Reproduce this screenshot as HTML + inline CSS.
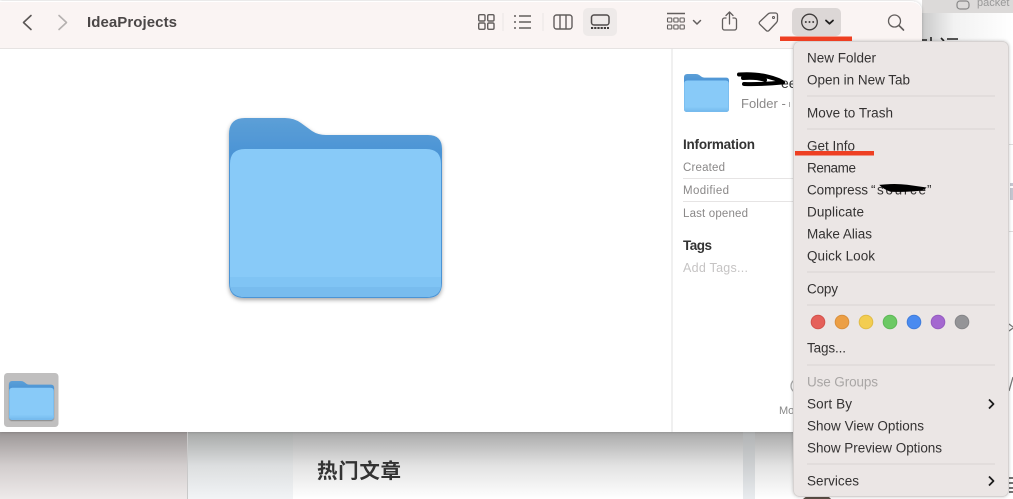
<!DOCTYPE html>
<html><head><meta charset="utf-8"><title>IdeaProjects</title>
<style>
html,body{margin:0;padding:0;background:#fff;width:1013px;height:499px;overflow:hidden}
svg{display:block}
text{font-family:"Liberation Sans","Noto Sans CJK SC",sans-serif}
.m{font-size:13.5px;fill:#343232}
.l{font-size:11.5px;fill:#8a8888}
.b{font-size:13.5px;font-weight:bold;fill:#333}
</style></head><body>
<svg width="1013" height="499" viewBox="0 0 1013 499" xmlns="http://www.w3.org/2000/svg">
<defs>
<linearGradient id="sh1" x1="0" y1="0" x2="0" y2="1"><stop offset="0" stop-color="#9b9696"/><stop offset=".5" stop-color="#d2cdcd"/><stop offset="1" stop-color="#eeeaea"/></linearGradient>
<linearGradient id="sh2" x1="0" y1="0" x2="0" y2="1"><stop offset="0" stop-color="#a6a8a7"/><stop offset=".5" stop-color="#dcdedf"/><stop offset="1" stop-color="#f2f4f6"/></linearGradient>
<linearGradient id="sh3" x1="0" y1="0" x2="0" y2="1"><stop offset="0" stop-color="#a9a9a9"/><stop offset=".5" stop-color="#e2e2e2"/><stop offset="1" stop-color="#fff"/></linearGradient>
<linearGradient id="sh4" x1="0" y1="0" x2="0" y2="1"><stop offset="0" stop-color="#b0b2b3"/><stop offset="1" stop-color="#e9ecef"/></linearGradient>
<linearGradient id="tr" x1="0" y1="0" x2="1" y2="0"><stop offset="0" stop-color="#c9c9c9"/><stop offset=".35" stop-color="#f2f2f2"/><stop offset="1" stop-color="#fff"/></linearGradient>
<linearGradient id="bk" x1="0" y1="0" x2="0" y2="1"><stop offset="0" stop-color="#5c9fd7"/><stop offset=".2" stop-color="#4b94d5"/><stop offset="1" stop-color="#4b94d5"/></linearGradient>
<filter id="fs" x="-10%" y="-10%" width="120%" height="125%"><feDropShadow dx="0" dy="2" stdDeviation="2" flood-color="#000" flood-opacity=".35"/></filter>
<filter id="fs2" x="-10%" y="-10%" width="120%" height="125%"><feDropShadow dx="0" dy="1" stdDeviation=".6" flood-color="#000" flood-opacity=".3"/></filter>
<filter id="ws" x="-5%" y="-5%" width="110%" height="110%"><feDropShadow dx="0" dy="0" stdDeviation="1.5" flood-color="#000" flood-opacity=".22"/></filter>
<symbol id="folder" viewBox="0 0 213 180" preserveAspectRatio="none">
<path d="M0 16Q0 0 16 0H56Q65 0 72 5L83 13Q89 17 97 17H199Q213 17 213 31V165Q213 180 198 180H15Q0 180 0 165Z" fill="url(#bk)"/>
<path d="M1 46Q1 31 16 31H197Q212 31 212 46V165Q212 179 197 179H16Q1 179 1 165Z" fill="#88caf8"/>
<path d="M1 159H212V165Q212 179 197 179H16Q1 179 1 165Z" fill="#80c4f4"/>
<path d="M1 169H212Q210 179 197 179H16Q3 179 1 169Z" fill="#78bcee"/>
</symbol>
</defs>

<!-- background page -->
<rect width="1013" height="499" fill="#fff"/>
<rect x="922" y="0" width="91" height="13" fill="#dcdad9"/>
<rect x="922" y="13" width="91" height="28" fill="url(#tr)"/>
<rect x="957" y="1" width="12" height="8" rx="3" fill="none" stroke="#888" stroke-width="1.2"/>
<text x="977" y="6" font-size="11" fill="#999">packet</text>
<path d="M922 40h5M931 37v4M941 38l3 3M947 39h11" stroke="#222" stroke-width="1.6" fill="none"/>
<rect x="0" y="432" width="187" height="67" fill="url(#sh1)"/>
<rect x="187" y="432" width="1.5" height="67" fill="#c9c9c9"/>
<rect x="188" y="432" width="105" height="67" fill="url(#sh2)"/>
<rect x="293" y="432" width="450" height="67" fill="url(#sh3)"/>
<rect x="743" y="432" width="12" height="67" fill="url(#sh4)"/>
<rect x="755" y="432" width="40" height="67" fill="url(#sh3)"/>
<text x="317" y="478" font-size="20.5" font-weight="bold" fill="#333" textLength="84" style='font-family:"Noto Sans CJK SC",sans-serif'>热门文章</text>
<path d="M1009 324l4 3M1009 331l4-3M1009 391l4-14" stroke="#777" stroke-width="1.3" fill="none"/>
<path d="M1009 478h4M1009 483h4M1009 488h4M1009 492h4" stroke="#444" stroke-width="1.6" fill="none"/>
<path d="M1010 183h3v3h-3zM1010 188h3v12h-3z" fill="#c4c6d0"/>
<rect x="1009" y="144" width="4" height="1" fill="#ddd"/>
<rect x="1009" y="231" width="4" height="1" fill="#ddd"/>
<path d="M803 499q3-3 6-3h16q4 0 6 3z" fill="#5b5046"/>

<!-- finder window -->
<path d="M0 1H910Q922 1 922 13V432H0Z" fill="#fff" filter="url(#ws)"/>
<path d="M0 2H910Q922 2 922 14V48H0Z" fill="#faf4f3"/>
<rect x="0" y="48" width="922" height="1" fill="#e6e3e2"/>
<rect x="671.500" y="48" width="1" height="384" fill="#e2e0e0"/>

<!-- nav -->
<path d="M31 15.500L23.500 22.500L31 29.500" fill="none" stroke="#5a5655" stroke-width="1.600" stroke-linecap="round" stroke-linejoin="round"/>
<path d="M59 15.500L66.500 22.500L59 29.500" fill="none" stroke="#b5b1b0" stroke-width="1.600" stroke-linecap="round" stroke-linejoin="round"/>
<text x="87" y="27" font-size="15" font-weight="bold" fill="#4b4747" textLength="90">IdeaProjects</text>

<!-- toolbar icons -->
<g fill="none" stroke="#625e5d" stroke-width="1.400">
<rect x="478.700" y="14.700" width="6.300" height="6.300" rx="1.300"/><rect x="487.700" y="14.700" width="6.300" height="6.300" rx="1.300"/>
<rect x="478.700" y="23" width="6.300" height="6.300" rx="1.300"/><rect x="487.700" y="23" width="6.300" height="6.300" rx="1.300"/>
<path d="M519 16h12M519 22h12M519 28h12"/>
<rect x="554" y="15" width="18" height="14" rx="2.500"/><path d="M560 15v14M566 15v14"/>
<path d="M667 13.500h18"/>
<rect x="667.500" y="18" width="4.300" height="4" rx=".6" stroke-width="1.100"/><rect x="673.800" y="18" width="4.300" height="4" rx=".6" stroke-width="1.100"/><rect x="680" y="18" width="4.300" height="4" rx=".6" stroke-width="1.100"/>
<rect x="667.500" y="25" width="4.300" height="4" rx=".6" stroke-width="1.100"/><rect x="673.800" y="25" width="4.300" height="4" rx=".6" stroke-width="1.100"/><rect x="680" y="25" width="4.300" height="4" rx=".6" stroke-width="1.100"/>
<path d="M693.500 20.500l3.500 3.500 3.500-3.500" stroke-width="1.500" stroke-linecap="round" stroke-linejoin="round"/>
<path d="M726 18h-1.500a2 2 0 0 0-2 2v8a2 2 0 0 0 2 2h10a2 2 0 0 0 2-2v-8a2 2 0 0 0-2-2h-1.500M729.500 24V12.500M726 15.500l3.500-3.500 3.500 3.500" stroke-width="1.300" stroke-linecap="round" stroke-linejoin="round"/>
<path d="M760 21.500l8-7.500q1-1 2.500-1h5a2 2 0 0 1 2 2v5q0 1.500-1 2.500l-7.500 8a2 2 0 0 1-2.800 0l-6.200-6a1.800 1.800 0 0 1 0-3z" stroke-width="1.300" stroke-linejoin="round"/>
<circle cx="773.500" cy="17.500" r="1" stroke-width="1.100"/>
</g>
<g fill="#625e5d"><circle cx="515" cy="16" r="1"/><circle cx="515" cy="22" r="1"/><circle cx="515" cy="28" r="1"/></g>
<rect x="502.500" y="13" width="1" height="18" fill="#ebe6e5"/>
<rect x="542.500" y="13" width="1" height="18" fill="#ebe6e5"/>
<rect x="583" y="8" width="34" height="28" rx="5" fill="#eeeae9"/>
<rect x="591.500" y="15" width="17.500" height="10" rx="2.500" fill="none" stroke="#4f4b4a" stroke-width="1.500"/>
<path d="M591 28h18" stroke="#3f3c3b" stroke-width="2" stroke-dasharray="2.200 1"/>
<rect x="792" y="8" width="49" height="28" rx="5" fill="#dcd7d6"/>
<circle cx="809.500" cy="22" r="7.800" fill="none" stroke="#3f3c3b" stroke-width="1.300"/>
<g fill="#3f3c3b"><circle cx="805.800" cy="22" r="1"/><circle cx="809.500" cy="22" r="1"/><circle cx="813.200" cy="22" r="1"/></g>
<path d="M826 20.500l3.500 3.200 3.500-3.200" fill="none" stroke="#1f1d1d" stroke-width="1.800" stroke-linecap="round" stroke-linejoin="round"/>
<circle cx="894.500" cy="21" r="6" fill="none" stroke="#625e5d" stroke-width="1.300"/>
<path d="M899 25.500l4.500 4.500" stroke="#625e5d" stroke-width="1.600" stroke-linecap="round"/>

<!-- main folder -->
<use href="#folder" x="229" y="118" width="213" height="180" filter="url(#fs)"/>

<!-- thumb -->
<rect x="4" y="373" width="54.500" height="54" rx="3.500" fill="#c0bfbf"/>
<use href="#folder" x="9" y="381" width="45" height="39" filter="url(#fs2)"/>

<!-- inspector -->
<use href="#folder" x="684" y="74" width="45" height="38"/>
<text x="781" y="88" font-size="14" fill="#333">ee</text>
<path d="M739 74.500q16-1 28 2t16 6M743 78q14-1 22 2M744 84q18 .5 38-1.500" fill="none" stroke="#000" stroke-width="4" stroke-linecap="round"/>
<text x="741" y="108" font-size="13" fill="#8a8888">Folder -</text>
<rect x="789" y="102" width="1" height="5" fill="#aaa"/>
<text x="683" y="149" class="b" textLength="72">Information</text>
<text x="683" y="171" class="l" textLength="42">Created</text>
<rect x="683" y="178" width="110" height="1" fill="#e6e4e4"/>
<text x="683" y="194" class="l" textLength="46">Modified</text>
<rect x="683" y="201" width="110" height="1" fill="#e6e4e4"/>
<text x="683" y="217" class="l" textLength="65">Last opened</text>
<text x="683" y="250" class="b" textLength="29">Tags</text>
<text x="683" y="272" font-size="12.500" fill="#c6c4c4" textLength="65">Add Tags...</text>
<circle cx="798" cy="386" r="7" fill="none" stroke="#aaa" stroke-width="1.300"/>
<text x="779" y="414" font-size="11" fill="#888">Mo</text>

<!-- menu -->
<rect x="793.500" y="41.500" width="215" height="455" rx="6" fill="#ebe6e5" stroke="#d6d2d1" stroke-width="1" filter="url(#ws)"/>
<text x="807" y="62.500" class="m" textLength="69">New Folder</text>
<text x="807" y="84.500" class="m" textLength="103">Open in New Tab</text>
<rect x="807" y="95.500" width="188" height="1" fill="#d8d4d3"/>
<text x="807" y="117.500" class="m" textLength="86">Move to Trash</text>
<rect x="807" y="128.500" width="188" height="1" fill="#d8d4d3"/>
<text x="807" y="150.500" class="m" textLength="48">Get Info</text>
<text x="807" y="172.500" class="m" textLength="49">Rename</text>
<text x="807" y="194.500" class="m" textLength="61">Compress</text>
<text x="871" y="194.500" class="m">“</text>
<text x="877" y="194.500" class="m" textLength="49">source</text>
<text x="927" y="194.500" class="m">”</text>
<path d="M881 185.500q14-1.500 26 0l18 2.500q-2 2-10 2.500-14 1-24 .5-6-2-10-5.500z" fill="#000" stroke="#000" stroke-width="1.500"/>
<text x="807" y="216.500" class="m" textLength="57">Duplicate</text>
<text x="807" y="238.500" class="m" textLength="65">Make Alias</text>
<text x="807" y="260.500" class="m" textLength="68">Quick Look</text>
<rect x="807" y="271.500" width="188" height="1" fill="#d8d4d3"/>
<text x="807" y="293.500" class="m" textLength="31">Copy</text>
<rect x="807" y="304.500" width="188" height="1" fill="#d8d4d3"/>
<g stroke-width="1">
<circle cx="818" cy="322" r="6.800" fill="#e5605a" stroke="#d2524c"/>
<circle cx="842" cy="322" r="6.800" fill="#ec9f45" stroke="#d98f3c"/>
<circle cx="866" cy="322" r="6.800" fill="#f3cd50" stroke="#e0bb46"/>
<circle cx="890" cy="322" r="6.800" fill="#6cc964" stroke="#5eb857"/>
<circle cx="914" cy="322" r="6.800" fill="#4a8bf0" stroke="#417ddb"/>
<circle cx="938" cy="322" r="6.800" fill="#a468d0" stroke="#955cc0"/>
<circle cx="962" cy="322" r="6.800" fill="#949497" stroke="#858588"/>
</g>
<text x="807" y="352.500" class="m" textLength="39">Tags...</text>
<rect x="807" y="364.500" width="188" height="1" fill="#d8d4d3"/>
<text x="807" y="386.500" class="m" style="fill:#a9a6a5" textLength="71">Use Groups</text>
<text x="807" y="408.500" class="m" textLength="45">Sort By</text>
<path d="M989 399.500l4.500 4.500-4.500 4.500" fill="none" stroke="#1d1c1c" stroke-width="1.800" stroke-linejoin="round"/>
<text x="807" y="430.500" class="m" textLength="117">Show View Options</text>
<text x="807" y="452.500" class="m" textLength="135">Show Preview Options</text>
<rect x="807" y="463.500" width="188" height="1" fill="#d8d4d3"/>
<text x="807" y="485.500" class="m" textLength="52">Services</text>
<path d="M989 476.500l4.500 4.500-4.500 4.500" fill="none" stroke="#1d1c1c" stroke-width="1.800" stroke-linejoin="round"/>

<!-- annotations -->
<rect x="780" y="36.500" width="72" height="4.500" fill="#ee3f22"/>
<rect x="795" y="151" width="79" height="4.500" fill="#ee3f22"/>
</svg>
</body></html>
